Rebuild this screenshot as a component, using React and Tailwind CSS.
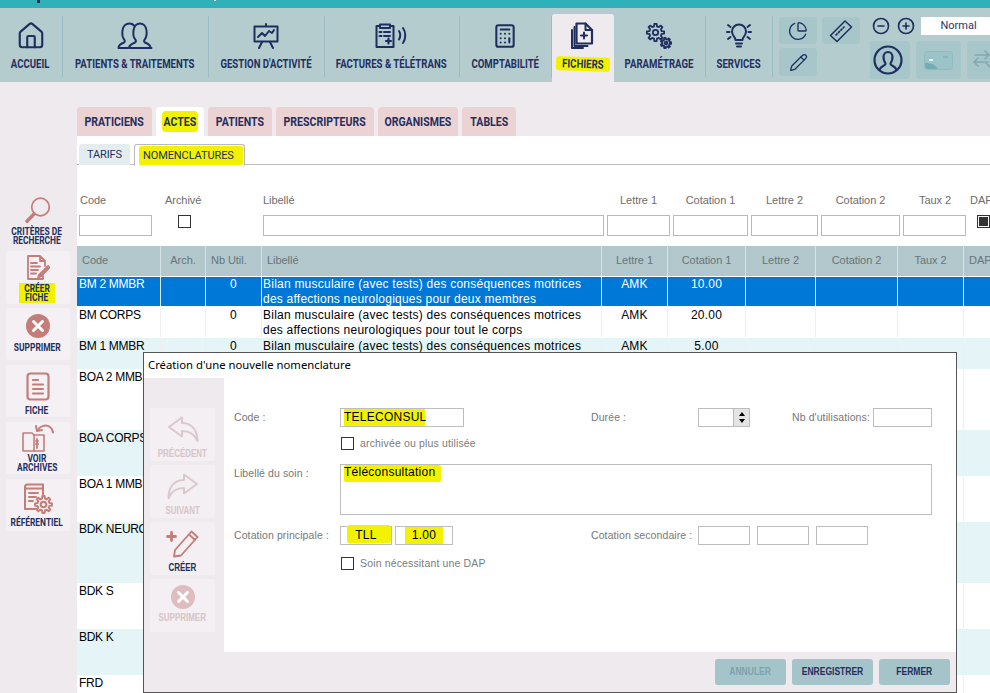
import React from "react";
import { Home, Calculator, PieChart, Pencil, CircleMinus, CirclePlus } from "lucide-react";

const NAVY = "#1f2d5f";
const ROSE = "#c47d78";

function Squeeze({ children, scale = "scale-x-[0.8]" }) {
  return <span className={"inline-block whitespace-nowrap origin-center " + scale}>{children}</span>;
}

function Svg({ w, h, box, color = NAVY, sw = 2, children }) {
  return (
    <svg width={w} height={h} viewBox={box} fill="none" stroke={color} strokeWidth={sw} strokeLinecap="round" strokeLinejoin="round">
      {children}
    </svg>
  );
}

function gearPath(cx, cy, ro, ri, teeth) {
  const pts = [];
  const step = (Math.PI * 2) / teeth;
  for (let i = 0; i < teeth; i++) {
    const a = i * step;
    [[-0.3, ri], [-0.17, ro], [0.17, ro], [0.3, ri]].forEach(([f, r]) => {
      const t = a + f * step;
      pts.push((cx + r * Math.cos(t)).toFixed(2) + " " + (cy + r * Math.sin(t)).toFixed(2));
    });
  }
  return "M" + pts.join("L") + "Z";
}

const Icons = {
  home: () => <Home size={30} color={NAVY} strokeWidth={1.7} />,
  patients: () => (
    <Svg w={36} h={28} box="0 0 36 28">
      <path d="M11 26H1.500c0-3 3-4.500 5.500-5.500 1-.5 1-2 .2-3C5.500 15.500 5 12 5.500 8.500 6 4 9 1.500 12.500 1.500c2 0 3.500.8 4.500 2" />
      <path d="M34.500 26H12c0-3 3.500-4.500 6-5.500 1.200-.5 1.200-2 .3-3-1.700-2-2.300-5.500-1.800-9 .6-4.500 3.500-7 6.500-7s6 2.500 6.500 7c.4 3.500-.1 7-1.800 9-.9 1-.9 2.500.3 3 2.500 1 5.500 2.500 5.500 5.500z" />
    </Svg>
  ),
  gestion: () => (
    <Svg w={26} h={26} box="0 0 26 26">
      <path d="M13 1v2M1.500 3.500h23v15h-23z" />
      <path d="M5 14l4-4 3 3 4-5 3 2 2-3" />
      <path d="M9 19l-3 6M17 19l3 6" />
    </Svg>
  ),
  factures: () => (
    <Svg w={33} h={25} box="0 0 33 25">
      <path d="M5 3H1.500v21h17V3H15M5 1.500h10v3.500H5z" />
      <path d="M4.500 9h2M9 9h6M4.500 13h2M9 13h6" />
      <path d="M11 18h5M13.500 15.500v5" strokeWidth="2.200" />
      <path d="M24 8c1.500 2.500 1.500 6 0 8.500M28 5c3 4 3 11 0 15" />
    </Svg>
  ),
  compta: () => <Calculator size={26} color={NAVY} strokeWidth={1.9} />,
  fichiers: () => (
    <Svg w={24} h={27} box="0 0 24 27">
      <path d="M5.500 1.500h9l6.500 6.500v13.500H5.500z" strokeWidth="2.200" />
      <path d="M14.500 1.500V8H21" />
      <path d="M13 10.500v6M10 13.500h6" />
      <path d="M3.500 5v19h13M1 8v18h11" />
    </Svg>
  ),
  param: () => (
    <Svg w={26} h={26} box="0 0 26 26" sw={1.800}>
      <path d={gearPath(9.500, 9.500, 8.700, 6.300, 8)} />
      <circle cx="9.500" cy="9.500" r="2.700" />
      <path d={gearPath(20, 20, 5.300, 3.700, 7)} />
      <circle cx="20" cy="20" r="1.300" />
    </Svg>
  ),
  services: () => (
    <Svg w={26} h={25} box="0 0 26 25">
      <path d="M9.500 17c0-3-3.500-4-3.500-8.500a7 7 0 0 1 14 0C20 13 16.500 14 16.500 17zM10 20.500h6M11 23.500h4" />
      <path d="M2 2l2.500 2M24 2l-2.500 2M1 9h2.500M25 9h-2.500M2 16l2.500-2M24 16l-2.500-2" />
    </Svg>
  ),
  ticket: () => (
    <Svg w={24} h={24} box="0 0 24 24" sw={1.500}>
      <path d="M1.500 16.500L16 2l6.500 6L8 22.500z" />
      <path d="M7 16l8-8" strokeDasharray="1.500 2" strokeWidth="1.700" />
    </Svg>
  ),
  avatar: () => (
    <Svg w={30} h={30} box="0 0 30 30" sw={2.200}>
      <circle cx="15" cy="15" r="13.500" />
      <path d="M7 24c.5-3 5-3 5.500-5 .2-1-2-2.500-2-7 0-3 2-5 4.500-5s4.500 2 4.500 5c0 4.500-2.200 6-2 7 .5 2 5 2 5.500 5" />
    </Svg>
  ),
  card: () => (
    <svg width="29" height="19" viewBox="0 0 29 19">
      <rect x="0.500" y="0.500" width="28" height="18" rx="3" fill="#9cc3c8" stroke="#8fbcc2" />
      <path d="M1 12c7 0 10 2 13 6H4c-2 0-3-1-3-3z" fill="#72adb5" />
      <rect x="5" y="8" width="4" height="2" fill="#eef7f7" />
      <path d="M19 6h5" stroke="#7fb0b7" strokeWidth="1.500" />
    </svg>
  ),
  swap: () => (
    <Svg w={24} h={24} box="0 0 24 24" color="#7fa9b0" sw={1.600}>
      <path d="M3 7h13M13 3l4 4-4 4M16 14H3M6 10l-4 4 4 4" />
      <path d="M14 15l6 6 4-4-6-6" />
    </Svg>
  ),
  search: () => (
    <Svg w={26} h={27} box="0 0 26 27" color={ROSE} sw={1.700}>
      <circle cx="15.500" cy="10" r="8.800" />
      <path d="M9 17l-7 7.200" strokeWidth="3.400" />
    </Svg>
  ),
  create: () => (
    <Svg w={24} h={25} box="0 0 24 25" color={ROSE} sw={1.800}>
      <path d="M14 1H2v23h15v-3M14 1l5 5v5M14 1v5h5" />
      <path d="M5 8h6M5 11.500h9M5 15h7M5 18.500h5" />
      <path d="M13 20l9-9 1.500 1.500-8.500 9-3 1z" fill={ROSE} />
    </Svg>
  ),
  x: ({ s = 24, c = ROSE }) => (
    <svg width={s} height={s} viewBox="0 0 24 24">
      <circle cx="12" cy="12" r="12" fill={c} />
      <path d="M7.500 7.500l9 9M16.500 7.500l-9 9" stroke="#fff" strokeWidth="3" strokeLinecap="round" />
    </svg>
  ),
  fiche: () => (
    <Svg w={24} h={29} box="0 0 24 29" color={ROSE} sw={2.200}>
      <rect x="1.500" y="1.500" width="21" height="26" rx="3" />
      <path d="M7 8h5M7 12.500h10M7 17h10M7 21.500h10" />
    </Svg>
  ),
  archives: () => (
    <Svg w={36} h={29} box="0 0 36 29" color={ROSE} sw={1.600}>
      <path d="M3 28V10h9l2 2h10v16z" />
      <path d="M14 12v16" />
      <path d="M17 16v9M16 18h2M16 21h2" strokeWidth="1.800" />
      <path d="M18 7c2-4 8-6 12-3 1.500 1 2.500 3 3 5.500" strokeWidth="2" />
      <path d="M16 3l1 5 5-1" strokeWidth="2" />
    </Svg>
  ),
  refer: () => (
    <Svg w={30} h={31} box="0 0 30 31" color={ROSE} sw={2}>
      <path d="M13 26H2V4c0-1.500 1-2.500 2.500-2.500H20v10" />
      <path d="M2 5.500h18M6 10h9M6 14h7M6 18h4" />
      <path d={gearPath(20.500, 21.500, 8.500, 6.200, 8)} />
      <circle cx="20.500" cy="21.500" r="2.800" />
    </Svg>
  ),
  prev: () => (
    <Svg w={32} h={27} box="0 0 32 27" color="#dcc8cb" sw={2}>
      <path d="M15 1.500L2 11l13 9.500V15c6 0 12 2 15.500 10 0-10-5-18-15.500-18z" />
    </Svg>
  ),
  next: () => (
    <Svg w={32} h={27} box="0 0 32 27" color="#dcc8cb" sw={2}>
      <path d="M17 1.500L30 11l-13 9.500V15c-6 0-12 2-15.500 10 0-10 5-18 15.500-18z" />
    </Svg>
  ),
  plusPen: () => (
    <Svg w={34} h={29} box="0 0 34 29" color={ROSE} sw={1.800}>
      <path d="M1.500 7.500h8M5.500 3.500v8" strokeWidth="2.800" />
      <path d="M9 21L25.500 2.500l6 5.500L15 26.500l-7 1z" />
      <path d="M23 5.500l6 5.500" />
    </Svg>
  ),
};

const navItems = [
  { label: "ACCUEIL", w: "w-[63px]", icon: Icons.home },
  { label: "PATIENTS & TRAITEMENTS", w: "w-[146px]", icon: Icons.patients },
  { label: "GESTION D'ACTIVITÉ", w: "w-[116px]", icon: Icons.gestion },
  { label: "FACTURES & TÉLÉTRANS", w: "w-[135px]", icon: Icons.factures },
  { label: "COMPTABILITÉ", w: "w-[92px]", icon: Icons.compta },
  { label: "FICHIERS", w: "w-[62px]", icon: Icons.fichiers, active: true },
  { label: "PARAMÉTRAGE", w: "w-[92px]", icon: Icons.param },
  { label: "SERVICES", w: "w-[67px]", icon: Icons.services },
];

function TopNav() {
  return (
    <div className="flex h-[74px] bg-[#b5cccf]">
      {navItems.map((n) => (
        <div
          key={n.label}
          className={
            "flex flex-col items-center shrink-0 " + n.w + " " +
            (n.active ? "bg-[#efeaee] rounded-t-[3px] mt-[6px] h-[68px] pt-[6px]" : "mt-[8px] mb-[5px] h-[61px] border-r border-[#9dbcc1] last:border-r-0 pt-[4px] pr-[1px]")
          }
        >
          <div className="h-[31px] flex items-center justify-center">
            <n.icon />
          </div>
          <div className="mt-[6px] text-[12px] leading-[14px] font-bold text-[#232f5f]">
            {n.active ? (
              <span className="inline-block bg-[#f2f200] rounded-[3px] rotate-[2deg] px-[1px]">
                <Squeeze>{n.label}</Squeeze>
              </span>
            ) : (
              <Squeeze>{n.label}</Squeeze>
            )}
          </div>
        </div>
      ))}
      <div className="flex-1 flex pl-[6px] pt-[9px] gap-[5px] min-w-0">
        <div className="flex flex-col gap-[4px] w-[38px]">
          <div className="h-[27px] bg-[#a7c6ca] rounded-[4px] flex items-center justify-center">
            <PieChart size={20} color={NAVY} strokeWidth={1.6} />
          </div>
          <div className="h-[28px] bg-[#a7c6ca] rounded-[4px] flex items-center justify-center">
            <Pencil size={19} color={NAVY} strokeWidth={1.6} />
          </div>
        </div>
        <div className="w-[38px]">
          <div className="h-[27px] bg-[#a7c6ca] rounded-[4px] flex items-center justify-center">
            <Icons.ticket />
          </div>
        </div>
        <div className="flex-1 flex flex-col min-w-0 ml-[5px] overflow-hidden">
          <div className="flex items-center h-[18px]">
            <CircleMinus size={18} color={NAVY} strokeWidth={2.2} className="ml-[2px] shrink-0" />
            <CirclePlus size={18} color={NAVY} strokeWidth={2.2} className="ml-[7px] shrink-0" />
            <div className="ml-[6px] w-[69px] shrink-0 h-[18px] bg-white text-[11px] leading-[18px] text-center pl-[6px] text-[#2a3568] font-['Roboto',sans-serif]">Normal</div>
          </div>
          <div className="flex gap-[6px] mt-[6px] ml-[-4px]">
            <div className="w-[44px] shrink-0 h-[38px] bg-[#a7c6ca] rounded-[4px] flex items-center justify-center"><Icons.avatar /></div>
            <div className="w-[45px] shrink-0 h-[38px] bg-[#a7c6ca] rounded-[4px] flex items-center justify-center"><Icons.card /></div>
            <div className="w-[45px] shrink-0 h-[38px] bg-[#a7c6ca] rounded-[4px] flex items-center pl-[5px]"><Icons.swap /></div>
          </div>
        </div>
      </div>
    </div>
  );
}

const sideItems = [
  { lines: ["CRITÈRES DE", "RECHERCHE"], icon: Icons.search, cls: "h-[50px] mt-0 pt-[2px]", lm: "mt-[3px]", plain: true },
  { lines: ["CRÉER", "FICHE"], icon: Icons.create, cls: "h-[53px] mt-[6px] pt-[4px]", lm: "mt-[3px]", mark: true },
  { lines: ["SUPPRIMER"], icon: Icons.x, cls: "h-[52px] mt-[4px] pt-[6px]", lm: "mt-[5px]" },
  { lines: ["FICHE"], icon: Icons.fiche, cls: "h-[52px] mt-[5px] pt-[7px]", lm: "mt-[5px]" },
  { lines: ["VOIR", "ARCHIVES"], icon: Icons.archives, cls: "h-[52px] mt-[5px] pt-[1px]", lm: "mt-[2px]" },
  { lines: ["RÉFÉRENTIEL"], icon: Icons.refer, cls: "h-[52px] mt-[5px] pt-[4px]", lm: "mt-[4px]" },
];

function SideRail() {
  return (
    <div className="w-[77px] shrink-0 pt-[113px] pl-[6px] pr-[7px]">
      {sideItems.map((s) => (
        <div key={s.lines[0]} className={"flex flex-col items-center rounded-[3px] " + s.cls + (s.plain ? "" : " bg-[#f4f0f4]")}>
          <div className="shrink-0 flex items-center justify-center"><s.icon /></div>
          <div className={"text-[10.500px] leading-[9px] font-bold text-[#232f5f] text-center mr-[2px] " + s.lm + " " + (s.mark ? "bg-[#f2f200] w-[36px] py-[1px]" : "")}>
            {s.lines.map((l) => <div key={l} className="flex justify-center"><Squeeze>{l}</Squeeze></div>)}
          </div>
        </div>
      ))}
    </div>
  );
}

const tabs = [
  { t: "PRATICIENS", w: "w-[75px]" },
  { t: "ACTES", w: "w-[48px]", active: true },
  { t: "PATIENTS", w: "w-[64px]" },
  { t: "PRESCRIPTEURS", w: "w-[98px]" },
  { t: "ORGANISMES", w: "w-[80px]" },
  { t: "TABLES", w: "w-[54px]" },
];

const COLS = "grid grid-cols-[84px_45px_56px_340px_66px_78px_70px_82px_66px_1fr]";

function Input({ className = "" }) {
  return <input readOnly className={"block h-[21px] bg-white border border-[#b9b9b9] outline-none " + className} />;
}

function Filters() {
  const lab = "text-[11px] leading-[13px] text-[#6d6d6d] tracking-[-0.05px]";
  return (
    <div className="flex h-[81px] pt-[29px] bg-white text-[#666] font-['Liberation_Sans',sans-serif]">
      <div className="w-[86px] pl-[3px]"><div className={lab}>Code</div><Input className="w-[73px] ml-[-1px] mt-[8px]" /></div>
      <div className="w-[100px] pl-[2px]"><div className={lab}>Archivé</div><div className="w-[13px] h-[13px] border border-[#333] ml-[13px] mt-[8px]" /></div>
      <div className="w-[344px]"><div className={lab}>Libellé</div><Input className="w-[341px] mt-[8px]" /></div>
      <div className="w-[66px]"><div className={lab + " text-center pr-[3px]"}>Lettre 1</div><Input className="w-[63px] mt-[8px]" /></div>
      <div className="w-[78px]"><div className={lab + " text-center pr-[3px]"}>Cotation 1</div><Input className="w-[75px] mt-[8px]" /></div>
      <div className="w-[70px]"><div className={lab + " text-center pr-[3px]"}>Lettre 2</div><Input className="w-[67px] mt-[8px]" /></div>
      <div className="w-[82px]"><div className={lab + " text-center pr-[3px]"}>Cotation 2</div><Input className="w-[79px] mt-[8px]" /></div>
      <div className="w-[67px]"><div className={lab + " text-center pr-[3px]"}>Taux 2</div><Input className="w-[63px] mt-[8px]" /></div>
      <div className="flex-1 min-w-0">
        <div className={lab}>DAP</div>
        <div className="w-[13px] h-[13px] border border-[#333] ml-[7px] mt-[8px] flex items-center justify-center bg-white"><div className="w-[9px] h-[9px] bg-[#333]" /></div>
      </div>
    </div>
  );
}

const headers = [
  ["Code", "text-left pl-[5px]"], ["Arch.", "text-center"], ["Nb Util.", "text-left pl-[5px]"], ["Libellé", "text-left pl-[5px]"],
  ["Lettre 1", "text-center"], ["Cotation 1", "text-center"], ["Lettre 2", "text-center"], ["Cotation 2", "text-center"], ["Taux 2", "text-center"], ["DAP", "text-left pl-[5px]"],
];

const rows = [
  { h: "h-[30px]", code: "BM 2 MMBR", nb: "0", lib: ["Bilan musculaire (avec tests) des conséquences motrices", "des affections neurologiques pour deux membres"], l1: "AMK", c1: "10.00", sel: true },
  { h: "h-[31px] pt-[1px]", code: "BM CORPS", nb: "0", lib: ["Bilan musculaire (avec tests) des conséquences motrices", "des affections neurologiques pour tout le corps"], l1: "AMK", c1: "20.00" },
  { h: "h-[32px] pt-[1px]", code: "BM 1 MMBR", nb: "0", lib: ["Bilan musculaire (avec tests) des conséquences motrices"], l1: "AMK", c1: "5.00", tint: true },
  { h: "h-[60px]", code: "BOA 2 MMBR" },
  { h: "h-[47px] pt-[1px]", code: "BOA CORPS", tint: true },
  { h: "h-[45px]", code: "BOA 1 MMBR" },
  { h: "h-[62px]", code: "BDK NEURO", tint: true },
  { h: "h-[45px]", code: "BDK S" },
  { h: "h-[47px] pt-[1px]", code: "BDK K", tint: true },
  { h: "h-[18px]", code: "FRD" },
];

function Table() {
  return (
    <div className="font-['Liberation_Sans',sans-serif]">
      <div className={COLS + " h-[30px] bg-[#b3c8cc]"}>
        {headers.map(([h, c]) => (
          <div key={h} className={"text-[11px] leading-[28px] text-[#66757a] tracking-[-0.05px] border-r border-[#d6e2e4] last:border-r-0 " + c}>{h}</div>
        ))}
      </div>
      {rows.map((r) => {
        const bg = r.sel ? "bg-[#0078d7] text-white" : r.tint ? "bg-[#e5f4f6] text-black" : "bg-white text-black";
        const line = r.sel ? "border-[#dbe9f6]" : "border-[#eeeeee]";
        const cell = "border-r " + line + " ";
        return (
          <div key={r.code} className={COLS + " overflow-hidden border-t border-[#ffffff] text-[12px] leading-[15px] tracking-[0.23px] " + r.h + " " + bg}>
            <div className={cell + "pl-[2px] whitespace-nowrap tracking-[-0.3px]"}>{r.code}</div>
            <div className={cell} />
            <div className={cell + "text-center"}>{r.nb}</div>
            <div className={cell + "pl-[1px] whitespace-nowrap"}>{(r.lib || []).map((l) => <div key={l}>{l}</div>)}</div>
            <div className={cell + "text-center"}>{r.l1}</div>
            <div className={cell + "text-center"}>{r.c1}</div>
            <div className={cell} />
            <div className={cell} />
            <div className={cell} />
            <div />
          </div>
        );
      })}
    </div>
  );
}

function Main() {
  return (
    <div className="flex-1 min-w-0 pt-[25px]">
      <div className="flex gap-[4px] h-[29px] items-end">
        {tabs.map((t) => (
          <div
            key={t.t}
            className={
              "text-[13.500px] font-bold text-[#232f5f] flex items-center justify-center rounded-t-[4px] h-[29px] " + t.w + " " +
              (t.active ? "bg-white" : "bg-[#ecd3d3]")
            }
          >
            {t.active ? (
              <span className="bg-[#f2f200] rounded-[4px] flex justify-center w-[36px] h-[21px] items-center"><Squeeze scale="scale-x-[0.78]">{t.t}</Squeeze></span>
            ) : (
              <Squeeze scale="scale-x-[0.78]">{t.t}</Squeeze>
            )}
          </div>
        ))}
      </div>
      <div className="bg-white">
        <div className="h-[29px] pt-[8px] pl-[2px] flex border-b border-[#bdbdc4] font-['Roboto',sans-serif] text-[11px] text-[#232f5f] tracking-[-0.1px]">
          <div className="w-[51px] h-[21px] bg-[#e3edf0] rounded-t-[3px] flex items-center justify-center pt-[2px]">TARIFS</div>
          <div className="ml-[4px] w-[111px] h-[22px] border border-b-white border-[#b9b9bd] rounded-t-[3px] pl-[4px] pr-[1px] pt-[1px] bg-white">
            <div className="bg-[#f2f200] h-[19px] leading-[20px] px-[4px] rounded-[2px] whitespace-nowrap">NOMENCLATURES</div>
          </div>
        </div>
        <Filters />
        <Table />
      </div>
    </div>
  );
}

function ModalSide({ icon, label, muted, compact }) {
  return (
    <div className={"h-[53px] w-[65px] bg-[#f3eff2] rounded-[2px] flex flex-col items-center " + (compact ? "pt-[5px]" : "pt-[6px]")}>
      <div className={"flex items-center justify-center " + (compact ? "h-[26px]" : "h-[30px]")}>{icon}</div>
      <div className={"text-[10.500px] leading-[12px] font-bold " + (compact ? "mt-[1px] " : "mt-[3px] ") + (muted ? "text-[#d9c4c7]" : "text-[#232f5f]")}>
        <Squeeze scale="scale-x-[0.76]">{label}</Squeeze>
      </div>
    </div>
  );
}

function Check({ label }) {
  return (
    <div className="flex items-center h-[13px] ml-[107px]">
      <div className="w-[13px] h-[13px] border border-[#333] bg-white shrink-0" />
      <span className="ml-[6px] mt-[1px] text-[10.500px] text-[#7b7b7b] tracking-[0.15px] whitespace-nowrap">{label}</span>
    </div>
  );
}

function Modal() {
  const label = "text-[10.500px] leading-[18px] text-[#777] tracking-[0.1px] whitespace-nowrap";
  const box = "h-[19px] border border-[#bdbdbd] bg-white text-[12px] leading-[17px] text-black";
  const mark = "bg-[#f2f200]";
  return (
    <div className="absolute left-[143px] top-[352px] w-[814px] h-[341px] border border-[#555] bg-white flex flex-col font-['Liberation_Sans',sans-serif]">
      <div className="h-[25px] pl-[4px] text-[11.300px] leading-[24px] text-black bg-white font-['Noto_Sans',sans-serif]">Création d'une nouvelle nomenclature</div>
      <div className="flex h-[274px]">
        <div className="w-[80px] bg-[#efeaee] pt-[30px] pl-[6px] flex flex-col gap-[4px]">
          <ModalSide icon={<Icons.prev />} label="PRÉCÉDENT" muted />
          <ModalSide icon={<Icons.next />} label="SUIVANT" muted />
          <ModalSide icon={<Icons.plusPen />} label="CRÉER" />
          <ModalSide icon={<Icons.x s={24} c="#dfbcbf" />} label="SUPPRIMER" muted compact />
        </div>
        <div className="flex-1 bg-white pl-[10px] pt-[30px]">
          <div className="flex h-[19px]">
            <div className={label + " w-[106px]"}>Code :</div>
            <div className={box + " w-[124px] pl-[3px]"}><span className={mark + " inline-block w-[81px] h-[17px] tracking-[0.25px]"}>TELECONSUL</span></div>
            <div className={label + " ml-[127px] w-[107px]"}>Durée :</div>
            <div className={box + " w-[52px] flex justify-end"}>
              <div className="w-[16px] h-[17px] bg-[#e4e4e4] border-l border-[#bbb] flex flex-col items-center justify-center">
                <div className="w-0 h-0 border-x-[3px] border-x-transparent border-b-[4px] border-b-black" />
                <div className="w-0 h-0 mt-[3px] border-x-[3px] border-x-transparent border-t-[4px] border-t-black" />
              </div>
            </div>
            <div className={label + " ml-[42px] w-[81px]"}>Nb d'utilisations:</div>
            <div className={box + " w-[59px]"} />
          </div>
          <div className="mt-[10px]"><Check label="archivée ou plus utilisée" /></div>
          <div className="flex mt-[14px] h-[51px]">
            <div className={label + " w-[106px]"}>Libellé du soin :</div>
            <div className="w-[592px] h-[51px] border border-[#bdbdbd] pl-[3px] text-[12px] leading-[15px] text-black tracking-[0.25px]">
              <span className={mark + " inline-block h-[17px] w-[97px] rounded-[2px] leading-[15px]"}>Téléconsultation</span>
            </div>
          </div>
          <div className="flex h-[19px] mt-[11px]">
            <div className={label + " w-[106px]"}>Cotation principale :</div>
            <div className={box + " w-[52px] flex justify-end"}>
              <span className={mark + " w-[44px] h-[18px] mt-[-2px] pr-[6px] pt-[2px] text-center rounded-[2px] tracking-[0.25px]"}>TLL</span>
            </div>
            <div className={box + " w-[58px] ml-[3px] flex justify-center tracking-[0.25px]"}><span className={mark + " px-[7px] h-[17px]"}>1.00</span></div>
            <div className={label + " ml-[138px] w-[107px]"}>Cotation secondaire :</div>
            <div className={box + " w-[52px]"} />
            <div className={box + " w-[52px] ml-[7px]"} />
            <div className={box + " w-[52px] ml-[7px]"} />
          </div>
          <div className="mt-[12px]"><Check label="Soin nécessitant une DAP" /></div>
        </div>
      </div>
      <div className="flex-1 bg-[#efeaee] flex justify-end gap-[6px] pr-[6px] pt-[7px]">
        {[["ANNULER", "w-[71px]", "text-[#7ba3ab]"], ["ENREGISTRER", "w-[81px]", "text-[#232f5f]"], ["FERMER", "w-[71px]", "text-[#232f5f]"]].map(([t, w, c]) => (
          <div key={t} className={"h-[26px] rounded-[3px] bg-[#a4c4c9] text-[11.500px] font-bold flex items-center justify-center " + w + " " + c}>
            <Squeeze scale="scale-x-[0.74]">{t}</Squeeze>
          </div>
        ))}
      </div>
    </div>
  );
}

export default function App() {
  return (
    <div className="relative w-[990px] h-[693px] overflow-hidden bg-[#efeaee] font-['Roboto',sans-serif]">
      <div className="h-[8px] bg-[#30b0b8] flex">
        <div className="ml-[37px] w-[3px] h-[3px] bg-[#1f2d5f]" />
        <div className="ml-[174px] w-[2px] h-[1px] bg-white" />
      </div>
      <TopNav />
      <div className="flex">
        <SideRail />
        <Main />
      </div>
      <Modal />
    </div>
  );
}
